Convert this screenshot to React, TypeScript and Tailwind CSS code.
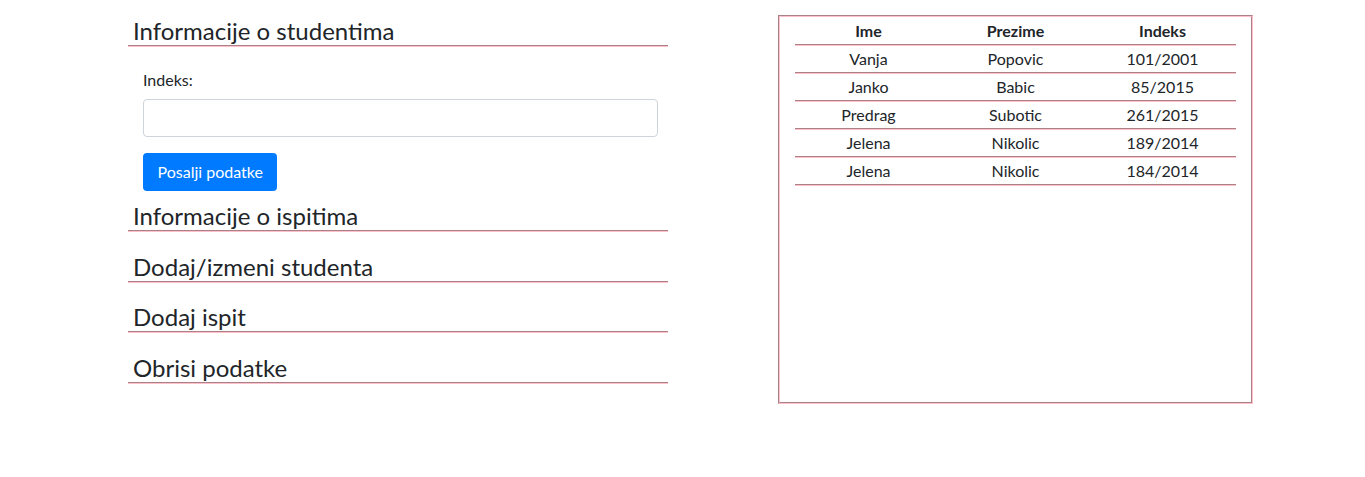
import React from "react";

const rows = [
  ["Vanja", "Popovic", "101/2001"],
  ["Janko", "Babic", "85/2015"],
  ["Predrag", "Subotic", "261/2015"],
  ["Jelena", "Nikolic", "189/2014"],
  ["Jelena", "Nikolic", "184/2014"],
];

function Header({ children }: { children: React.ReactNode }) {
  return (
    <div className="border-b-2 border-[pink] [border-bottom-style:groove] pl-[5px] text-[24px] leading-[28px] text-[#212529]">
      {children}
    </div>
  );
}

export default function App() {
  return (
    <div className="w-[1365px] h-[477px] bg-white font-['Lato','Liberation_Sans',sans-serif] text-[#212529]">
      <div className="flex pt-[17px] pl-[128px]">
        <div className="w-[540px] flex flex-col">
          <Header>Informacije o studentima</Header>
          <div className="pl-[15px] pr-[10px] pt-[21px] pb-[11px] flex flex-col">
            <label className="text-[16px] leading-[24px]">Indeks:</label>
            <input className="mt-[7px] h-[38px] w-full border border-[#ced4da] rounded-[4px] px-3 outline-none" />
            <div className="mt-[16px]">
              <button className="h-[38px] px-[14.5px] bg-[#007bff] text-white text-[16px] rounded-[4px]">
                Posalji podatke
              </button>
            </div>
          </div>
          <div className="flex flex-col gap-[20.67px]">
            <Header>Informacije o ispitima</Header>
            <Header>Dodaj/izmeni studenta</Header>
            <Header>Dodaj ispit</Header>
            <Header>Obrisi podatke</Header>
          </div>
        </div>
        <div className="ml-[110px] w-[475px] h-[389px] border-2 border-[pink] [border-style:groove] px-[15px] -mt-[2px]">
          <table className="w-full table-fixed border-collapse text-[16px]">
            <thead>
              <tr className="border-b-2 border-[pink] [border-bottom-style:groove]">
                <th className="h-[28px] font-bold text-center">Ime</th>
                <th className="font-bold text-center">Prezime</th>
                <th className="font-bold text-center">Indeks</th>
              </tr>
            </thead>
            <tbody>
              {rows.map((r, i) => (
                <tr key={i} className="border-b-2 border-[pink] [border-bottom-style:groove]">
                  {r.map((c, j) => (
                    <td key={j} className="h-[28px] text-center">
                      {c}
                    </td>
                  ))}
                </tr>
              ))}
            </tbody>
          </table>
        </div>
      </div>
    </div>
  );
}
